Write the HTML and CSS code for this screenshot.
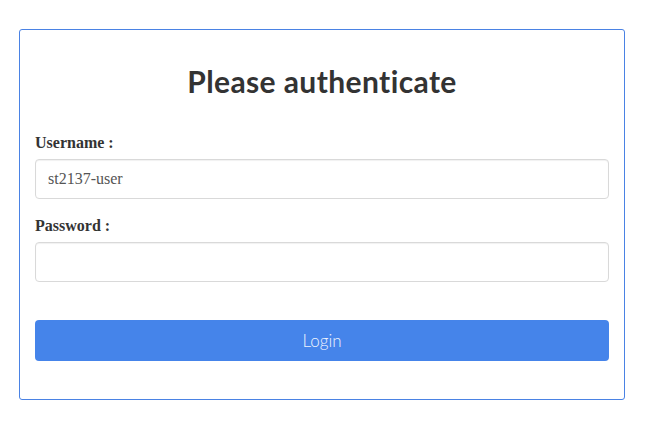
FILE: index.html
```html
<!DOCTYPE html>
<html>
<head>
<meta charset="utf-8">
<link rel="stylesheet" href="styles.css">
</head>
<body>
<div class="page">
  <form class="card">
    <h2 class="title">Please authenticate</h2>
    <div class="group">
      <label class="label" for="u">Username :</label>
      <input class="field" id="u" type="text" value="st2137-user">
    </div>
    <div class="group">
      <label class="label" for="p">Password :</label>
      <input class="field" id="p" type="password">
    </div>
    <button class="btn" type="button">Login</button>
  </form>
</div>
</body>
</html>
```

FILE: styles.css
```css
html, body {
  margin: 0;
  padding: 0;
  background: #ffffff;
}
.page {
  padding: 29px 27px 0 19px;
}
.card {
  display: block;
  margin: 0;
  border: 1px solid #4a82e4;
  border-radius: 3px;
  padding: 31px 15px 38px;
  background: #fff;
}
.title {
  margin: 0 0 30px;
  text-align: center;
  font-family: "Lato", "Open Sans", sans-serif;
  font-variant-ligatures: none;
  font-weight: 700;
  font-size: 30px;
  letter-spacing: 0.4px;
  line-height: 40px;
  color: #333333;
}
.group {
  margin-bottom: 15px;
}
.label {
  display: block;
  margin-bottom: 5px;
  font-family: "Liberation Serif", serif;
  font-weight: bold;
  font-size: 16px;
  line-height: 23px;
  color: #333333;
}
.field {
  display: block;
  box-sizing: border-box;
  width: 100%;
  height: 40px;
  margin: 0;
  padding: 6px 12px;
  border: 1px solid #d9d9d9;
  border-radius: 4px;
  box-shadow: inset 0 1px 1px rgba(0,0,0,0.06);
  font-family: "Liberation Serif", serif;
  font-size: 16px;
  color: #555555;
  background: #fff;
  outline: none;
}
.btn {
  display: block;
  box-sizing: border-box;
  width: 100%;
  height: 41px;
  margin-top: 38px;
  border: none;
  border-radius: 4px;
  background: #4584ea;
  color: #eef3fd;
  font-family: "Lato", "Open Sans", sans-serif;
  font-weight: 300;
  font-size: 17px;
  cursor: pointer;
}
```
